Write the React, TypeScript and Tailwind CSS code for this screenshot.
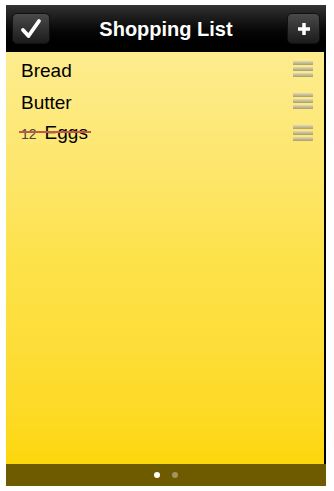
import React from "react";

const items = [
  { name: "Bread", done: false },
  { name: "Butter", done: false },
  { name: "Eggs", qty: "12", done: true },
];

function Handle() {
  return (
    <div className="flex flex-col gap-[2px] w-[20px] -mt-[3px]">
      {[0, 1, 2].map((i) => (
        <div
          key={i}
          className="h-[4px] w-full bg-gradient-to-b from-[#e2dab4] to-[#a89e70]"
        />
      ))}
    </div>
  );
}

export default function App() {
  return (
    <div
      className="w-[334px] h-[491px] bg-white pl-[6px] pt-[5px]"
      style={{ fontFamily: '"Liberation Sans", Arial, sans-serif' }}
    >
      <div className="w-[320px] h-[481px] flex flex-col bg-black">
        <header className="h-[47px] grid grid-cols-[1fr_auto_1fr] items-center px-[6px] bg-gradient-to-b from-[#333333] via-[#0a0a0a] to-black">
          <button className="justify-self-start w-[38px] h-[31px] rounded-[5px] bg-gradient-to-b from-[#4a4a4a] to-[#1c1c1c] border border-[#111] flex items-center justify-center">
            <svg width="22" height="22" viewBox="0 0 22 22">
              <path
                d="M3 12 L8.5 18 L19 3"
                fill="none"
                stroke="white"
                strokeWidth="3.8"
                strokeLinecap="round"
                strokeLinejoin="round"
              />
            </svg>
          </button>
          <h1 className="text-white font-bold text-[20px]">Shopping List</h1>
          <button className="justify-self-end w-[33px] h-[31px] rounded-[5px] bg-gradient-to-b from-[#4a4a4a] to-[#1c1c1c] border border-[#111] flex items-center justify-center">
            <svg width="16" height="16" viewBox="0 0 16 16">
              <path d="M8 2 V14 M2 8 H14" stroke="white" strokeWidth="3.5" />
            </svg>
          </button>
        </header>
        <main className="flex-1 mr-[2px] bg-gradient-to-b from-[#fdec8e] via-[#fde24a] to-[#fdd70a] pt-[2px]">
          {items.map((it) => (
            <div
              key={it.name}
              className="h-[32px] flex items-center justify-between pl-[15px] pr-[11px]"
            >
              <div className="relative flex items-baseline">
                {it.qty && (
                  <span className="text-[14px] text-[#444] mr-[8px]">
                    {it.qty}
                  </span>
                )}
                <span className="text-[19px] text-black leading-none">
                  {it.name}
                </span>
                {it.done && (
                  <div className="absolute left-[-2px] right-[-3px] top-[8px] h-[2px] bg-[#c05a48]" />
                )}
              </div>
              <Handle />
            </div>
          ))}
        </main>
        <footer className="h-[22px] bg-[#6e5b00] flex items-center justify-center gap-[12px]">
          <div className="w-[6px] h-[6px] rounded-full bg-white" />
          <div className="w-[6px] h-[6px] rounded-full bg-[#a09660]" />
        </footer>
      </div>
    </div>
  );
}
